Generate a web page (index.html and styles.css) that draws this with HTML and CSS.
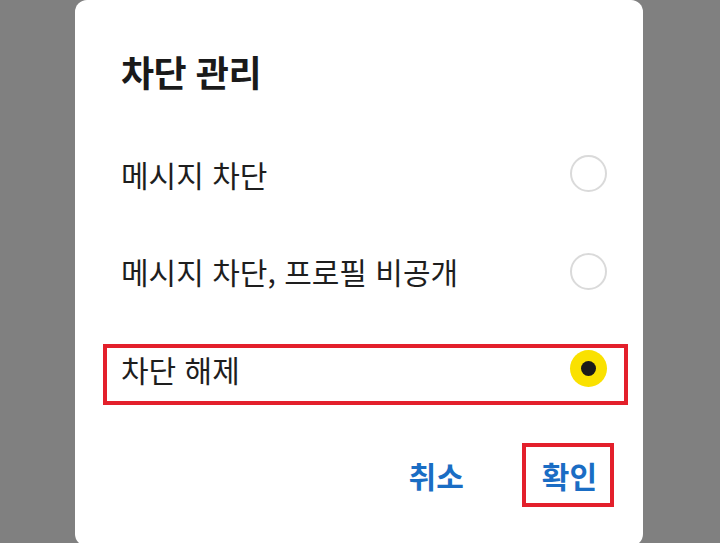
FILE: index.html
```html
<!DOCTYPE html>
<html lang="ko">
<head>
<meta charset="utf-8">
<title>차단 관리</title>
<link rel="stylesheet" href="styles.css">
</head>
<body>
<div class="screen">
  <div class="dialog">
    <h1 class="title">차단 관리</h1>
    <ul class="options">
      <li class="option">
        <span class="label">메시지 차단</span>
        <span class="radio"></span>
      </li>
      <li class="option">
        <span class="label">메시지 차단, 프로필 비공개</span>
        <span class="radio"></span>
      </li>
      <li class="option highlight">
        <span class="label">차단 해제</span>
        <span class="radio checked"></span>
      </li>
    </ul>
    <div class="actions">
      <button class="btn">취소</button>
      <button class="btn btn-marked">확인</button>
    </div>
  </div>
</div>
</body>
</html>
```

FILE: styles.css
```css
* { box-sizing: border-box; }
html, body {
  margin: 0;
  padding: 0;
  height: 100%;
  background: #808080;
  overflow: hidden;
}
body {
  font-family: "Noto Sans CJK KR", "Noto Sans", sans-serif;
  color: #1e1e1e;
}
.screen {
  display: flex;
  height: 100%;
  padding-left: 75px;
}
.dialog {
  width: 568px;
  height: 546px;
  background: #ffffff;
  border-radius: 12px;
  display: flex;
  flex-direction: column;
  padding: 0 36px 0 46px;
}
.title {
  margin: 0;
  height: 125px;
  padding-top: 49px;
  font-size: 36px;
  font-weight: 700;
  line-height: 44px;
  letter-spacing: -0.5px;
  color: #1a1a1a;
}
.options {
  list-style: none;
  margin: 0;
  padding: 0;
}
.option {
  position: relative;
  height: 97.5px;
  display: flex;
  align-items: center;
  justify-content: space-between;
}
.label {
  font-size: 30px;
  line-height: 36px;
  color: #1e1e1e;
}
.radio {
  width: 37px;
  height: 37px;
  border-radius: 50%;
  border: 2px solid #dadada;
  display: flex;
  align-items: center;
  justify-content: center;
}
.radio.checked {
  border: none;
  background: #fae100;
}
.radio.checked::before {
  content: "";
  width: 15px;
  height: 15px;
  border-radius: 50%;
  background: #1a1a1a;
}
.highlight::after {
  content: "";
  position: absolute;
  left: -18px;
  right: -21px;
  top: 24px;
  height: 53px;
  border: 4px solid #e3202b;
  pointer-events: none;
}
.actions {
  display: flex;
  justify-content: flex-end;
  align-items: center;
  gap: 78px;
  padding-top: 37px;
  padding-right: 10px;
}
.btn {
  position: relative;
  background: none;
  border: none;
  padding: 0;
  font-family: inherit;
  font-size: 30px;
  font-weight: 700;
  line-height: 40px;
  color: #1a6dc4;
}
.btn-marked::after {
  content: "";
  position: absolute;
  left: -20px;
  right: -17px;
  top: -12px;
  bottom: -12px;
  border: 4px solid #e3202b;
}
```
